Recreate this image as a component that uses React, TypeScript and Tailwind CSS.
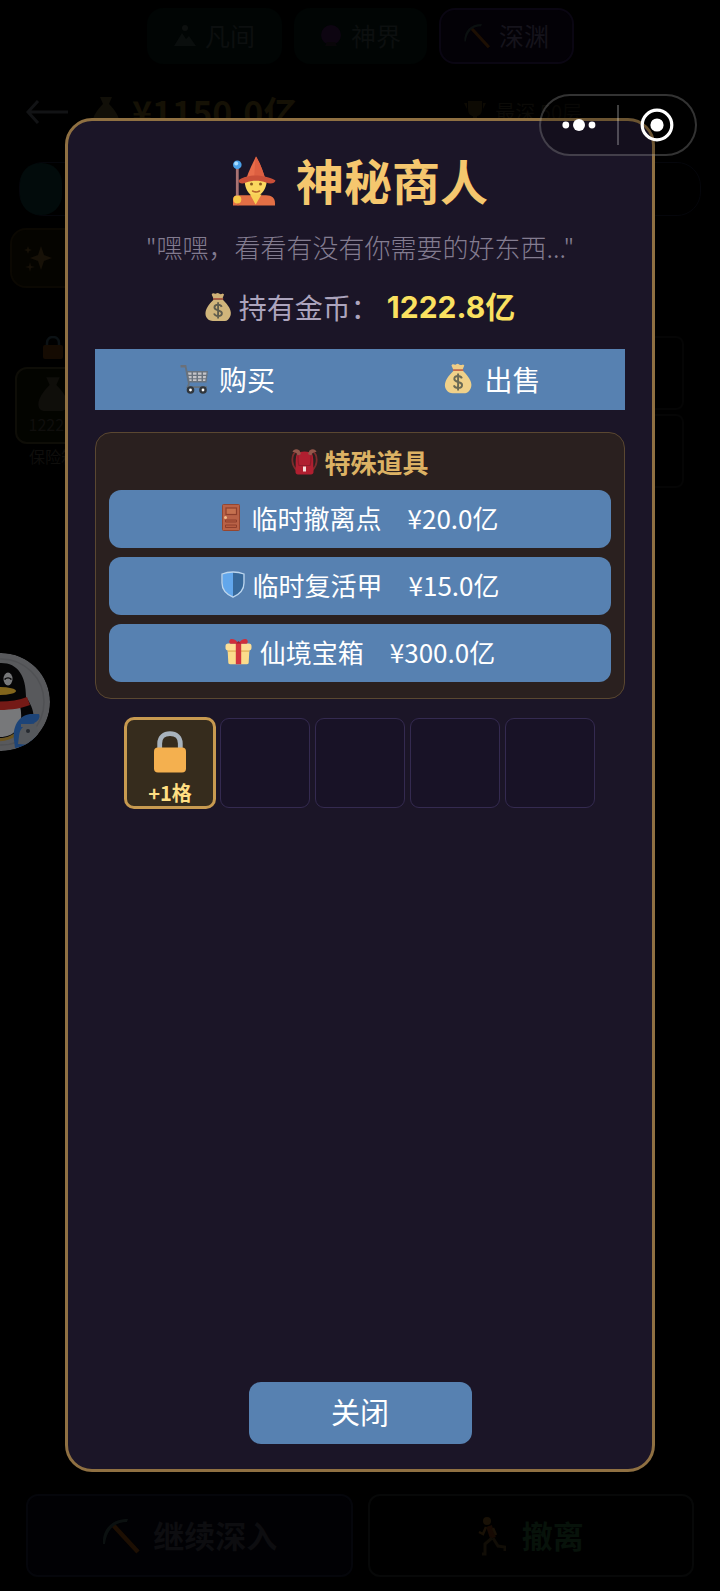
import React from "react";

type IconProps = { className: string };

const Wizard = ({ className }: IconProps) => (
  <svg viewBox="0 0 44 50" className={className} aria-hidden="true">
    <path d="M1 49.500V43c0-2.500 2-3.800 5-3.800h28c6 0 9 2.800 9 8v2.300z" fill="#e36f45" />
    <path d="M6 39.200V49.500" stroke="#c75a38" strokeWidth="1" />
    <path d="M12.500 22h22.500c0 9-3.500 14.500-8 17.500l-3.500 8.500-3.800-8.500c-4.500-3-7.200-8.500-7.200-17.500z" fill="#fbd75f" />
    <path d="M18 38.500h11.500l-5.800 10z" fill="#f8cf55" />
    <path d="M12.500 21h22.500l-1.500 4c-6-1.500-13-1.500-19 0z" fill="#e9b944" />
    <path d="M24 0.500c-3.500 7-7.500 15-9.500 21.500h18.500C31 15 27.500 6 24 0.500z" fill="#e86c4a" />
    <path d="M24 0.500c-1.500 6-1 15-2 21.500h11C31 15 27.500 6 24 0.500z" fill="#dd5f41" />
    <path d="M15 20.500C10 21.500 7.500 23.500 6.500 24.500c0 2.800 3.500 3.800 7.500 2 6-2.500 14-2.500 20 0 4.500 1.800 9 .8 9.500-2-2-1-5-3-11-4-5-1.500-13-1.500-17.500 0z" fill="#c94f38" />
    <circle cx="19.500" cy="28" r="1.500" fill="#8a5a20" />
    <circle cx="28.500" cy="28" r="1.500" fill="#8a5a20" />
    <path d="M20.500 35c2.500 1.300 5 1.300 7 0" stroke="#b5642c" strokeWidth="1.500" fill="none" strokeLinecap="round" />
    <path d="M5.300 11v32" stroke="#a97272" strokeWidth="2.800" />
    <circle cx="5.300" cy="8.800" r="4.300" fill="#4aa0e8" />
    <circle cx="4.200" cy="7.500" r="2" fill="#a8dcff" />
    <circle cx="5.300" cy="43.500" r="4" fill="#f7c948" />
  </svg>
);

const MoneyBag = ({ className }: IconProps) => (
  <svg viewBox="0 0 28 32" className={className} aria-hidden="true">
    <path d="M8 1.500c1.500-1 2.500.8 3.800 0s2.200-1 3.400 0 2.300.8 4 0l1.300 1-1.800 4.500H9.200L7.200 2.500z" fill="#f0cd85" />
    <path d="M9.500 8h9.500c4 4 8.500 9 8.800 14 .2 2.500-.6 4.500-1.800 6-1.500 2.600-4 3.200-6 3.200H8.500c-2.500 0-5-1-6.200-3C.8 26.500.2 24 .6 21.500 1.500 16 6 11.500 9.500 8z" fill="#f0d18a" />
    <path d="M9.500 7.300h9.300" stroke="#c7694a" strokeWidth="1.800" strokeLinecap="round" />
    <path d="M18 15.800c-.7-1.600-2-2.300-3.900-2.300-2.300 0-3.900 1.100-3.900 3 0 4 8 2.200 8 6.100 0 2-1.700 3.100-4.100 3.100-2.200 0-3.700-.9-4.400-2.700M14.100 10.800v17.600" stroke="#6b6a55" strokeWidth="2" fill="none" />
  </svg>
);

const Cart = ({ className }: IconProps) => (
  <svg viewBox="0 0 29 30" className={className} aria-hidden="true">
    <path d="M1 2h4.500l3.500 18" stroke="#66717c" strokeWidth="1.800" fill="none" />
    <path d="M0.500 1h5.500v2.500H0.500z" fill="#6b7079" />
    <path d="M6 7h22l-1.500 11.500H8.300z" fill="#69737e" />
    <g fill="#c4c4c8">
      <path d="M8 8.500h3.500v2.300H8.500zM13 8.500h3.500v2.300H13zM18 8.500h3.500v2.300H18zM23 8.500h3.500l-.3 2.300H23z" />
      <path d="M8.600 12h3v2.200H9zM13 12h3.500v2.200H13zM18 12h3.500v2.200H18zM23 12h3l-.3 2.200H23z" />
      <path d="M9.200 15.300h2.400v1.600H9.500zM13 15.300h3.500v1.600H13zM18 15.300h3.500v1.600H18zM23 15.300h2.500l-.2 1.600H23z" />
    </g>
    <path d="M9 20l-1.500 3.200h19.500" stroke="#66717c" strokeWidth="1.800" fill="none" />
    <circle cx="10.500" cy="26" r="2.600" fill="#fff" stroke="#30363c" strokeWidth="2.400" />
    <circle cx="23" cy="26" r="2.600" fill="#fff" stroke="#30363c" strokeWidth="2.400" />
  </svg>
);

const Backpack = ({ className }: IconProps) => (
  <svg viewBox="0 0 27 27" className={className} aria-hidden="true">
    <path d="M6 3C2 5 1 10 1.500 14c.3 4 2 6 4 8M21 3c4 2 5 7 4.500 11-.3 4-2 6-4 8" stroke="#7c2b2c" strokeWidth="1.800" fill="none" />
    <path d="M6 5.500C8 4.300 10 3.500 13.500 3.500S19 4.300 21 5.500c1.500 3 1.300 8 1.300 12l.2 6.500c0 1.500-1 2.500-2.500 2.500H7c-1.500 0-2.500-1-2.500-2.500l.2-6.500c0-4-.2-9 1.300-12z" fill="#b01f30" />
    <path d="M1.500 4C2.500.8 6 .5 8.500 2.500L10 6 6.500 8c0-3-2-4-5-4zM25.500 4c-1-3.200-4.500-3.500-7-1.500L17 6l3.500 2c0-3 2-4 5-4z" fill="#93574b" />
    <path d="M7 7c0 5 0 8 1 10.500h11c1-2.500 1-5.500 1-10.500" stroke="#8f1a29" strokeWidth="1.200" fill="none" />
    <path d="M12 18.500h3v5h-3z" fill="#f6dedb" />
  </svg>
);

const Door = ({ className }: IconProps) => (
  <svg viewBox="0 0 18 27" className={className} aria-hidden="true">
    <rect x="0.500" y="0.500" width="17" height="26" rx="1" fill="#b96247" stroke="#96462f" />
    <rect x="4" y="4" width="10.500" height="6.500" fill="#c5714f" stroke="#8e3f2c" strokeWidth="1.200" />
    <path d="M3.500 16h11v2h-11zM3.500 21h11v2.500h-11z" fill="#b65c40" stroke="#8e3f2c" />
    <circle cx="3.500" cy="13.500" r="1.500" fill="#f4bd8b" />
  </svg>
);

const Shield = ({ className }: IconProps) => (
  <svg viewBox="0 0 24 27" className={className} aria-hidden="true">
    <path d="M12 1.200C8.500 1.200 5 1.800 1.500 3v9c0 6.500 4.500 11 10.500 14z" fill="#62a7ec" />
    <path d="M12 1.200c3.500 0 7 .6 10.500 1.800v9c0 6.500-4.500 11-10.500 14z" fill="#37699b" />
    <path d="M12 1C8.500 1 4.500 1.600 1 3v9c0 6.500 5 11.500 11 14.200C18 23.500 23 18.500 23 12V3C19.500 1.600 15.500 1 12 1z" fill="none" stroke="#bcd6ee" strokeWidth="1.300" />
  </svg>
);

const Gift = ({ className }: IconProps) => (
  <svg viewBox="0 0 27 27" className={className} aria-hidden="true">
    <path d="M2.500 10h22l-.8 14.500c0 1-.7 1.700-1.700 1.700H5c-1 0-1.700-.7-1.700-1.700z" fill="#fbdc8c" />
    <path d="M2.600 11h21.800l-.2 3H2.800z" fill="#e9bc66" />
    <rect x="0.500" y="5.500" width="26" height="6.800" rx="2.600" fill="#fddf97" />
    <path d="M10.800 5h5.400v21.200h-5.400z" fill="#d2343f" />
    <path d="M13.500 5.500C11 1.500 7 .2 5.200 1.500 3.500 3 4.200 5 5.500 5.700h16c1.300-.7 2-2.700.3-4.200-1.800-1.300-5.800 0-8.300 4z" fill="#cf2f3d" />
    <path d="M11 5.500L13.500 3 16 5.500z" fill="#a31f30" />
  </svg>
);

const Lock = ({ className }: IconProps) => (
  <svg viewBox="0 0 34 42" className={className} aria-hidden="true">
    <path d="M6.700 19v-6.500C6.700 6.500 11 2.700 17 2.700s10.300 3.800 10.300 9.800V19" fill="none" stroke="#a8b3bd" strokeWidth="4.800" />
    <rect x="1" y="16.500" width="32" height="25" rx="4" fill="#f4b04f" />
  </svg>
);

const Pickaxe = ({ className }: IconProps) => (
  <svg viewBox="0 0 40 40" className={className} aria-hidden="true">
    <path d="M12 9l25 27" stroke="#1d0f03" strokeWidth="4.500" />
    <path d="M2 28C1 14 10 3 27 3l-1 3C14 6 6 13 4 28z" fill="#0b1010" />
  </svg>
);

const Runner = ({ className }: IconProps) => (
  <svg viewBox="0 0 28 40" className={className} aria-hidden="true" fill="none">
    <circle cx="9" cy="5" r="4" fill="#191106" />
    <path d="M11 10l4 12" stroke="#170a03" strokeWidth="6" />
    <path d="M8 11l-3 7-4-2M15 12l3 7" stroke="#191106" strokeWidth="2.500" />
    <path d="M14 22l-7 6v10H4M15 22l5 8 7 1v4" stroke="#110d06" strokeWidth="3" />
  </svg>
);

const Penguin = () => (
  <svg viewBox="0 0 98 98" className="size-[98px]" aria-hidden="true">
    <defs>
      <clipPath id="badge"><circle cx="49" cy="49" r="49" /></clipPath>
    </defs>
    <g clipPath="url(#badge)">
      <circle cx="49" cy="49" r="49" fill="#58595c" />
      <circle cx="49" cy="49" r="43" fill="none" stroke="#505154" strokeWidth="1.500" />
      <path d="M23 45C23 22 32 10 49 10s25 13 25 34c5 7 9 16 7 23l-6-4c-2 14-10 22-26 22S25 77 23 63l-6 4c-2-7 2-16 6-22z" fill="#050506" />
      <path d="M27 53c12 3 30 3 41 0 4 16-2 31-20 31S24 69 27 53z" fill="#77787a" />
      <path d="M22 44c14 6 38 6 53 0l3 8c-14 6-43 7-58 1z" fill="#741a16" />
      <ellipse cx="40" cy="26" rx="4.500" ry="6.500" fill="#77787a" />
      <ellipse cx="56" cy="26" rx="4.500" ry="6.500" fill="#77787a" />
      <path d="M52.500 26.500c2-2 5-2 7 0" stroke="#09090a" strokeWidth="1.600" fill="none" />
      <ellipse cx="48" cy="38" rx="16" ry="4" fill="#82651c" />
      <path d="M36 85c10 3 20 2 28-4" stroke="#6c5520" strokeWidth="3" fill="none" />
      <path d="M62 87c-2-16 7-26 18-26h7c2 4-2 8-5 9l4 10-8 12-15 3z" fill="#1d4478" />
      <path d="M67 83c1-9 7-13 17-12l3 12-9 9-12-1z" fill="#55585c" />
      <path d="M69 71h10v3H69z" fill="#55585c" />
      <circle cx="76" cy="78" r="2" fill="#252a30" />
    </g>
  </svg>
);

function DimmedPage() {
  return (
    <div className="flex min-h-screen flex-col bg-black" aria-hidden="true">
      <nav className="flex justify-center gap-3 pt-2 text-[25px] text-[#0c0f0f]">
        <span className="flex h-14 w-[135px] items-center justify-center gap-2 rounded-2xl bg-[#010504]">
          <svg viewBox="0 0 24 24" className="size-6"><path d="M1 22L9 9l4 6 3-3 7 10z" fill="#0a0e0d" /><circle cx="12" cy="4" r="3" fill="#0d100f" /></svg>
          凡间
        </span>
        <span className="flex h-14 w-[133px] items-center justify-center gap-2 rounded-2xl bg-[#010504]">
          <svg viewBox="0 0 24 24" className="size-6"><circle cx="12" cy="11" r="10" fill="#0d0511" /><path d="M6 22h12l-2-4H8z" fill="#090609" /></svg>
          神界
        </span>
        <span className="flex h-14 w-[135px] items-center justify-center gap-2 rounded-2xl border-2 border-[#0a0612] bg-[#030106] text-[#15131b]">
          <Pickaxe className="size-7" />
          深渊
        </span>
      </nav>
      <header className="flex items-center gap-6 px-[26px] pt-6">
        <svg viewBox="0 0 42 24" className="h-6 w-[42px]" fill="none" stroke="#121315" strokeWidth="3"><path d="M12 1L2 12l10 11M2 12h40" /></svg>
        <span className="flex items-center gap-3 text-[34px] leading-[48px] font-bold text-[#151105]">
          <svg viewBox="0 0 28 32" className="h-8 w-7"><path d="M8 1h12l-3 7c6 6 10 12 10 17 0 4-3 6-6 6H7c-4 0-6-2-6-6 0-5 4-11 10-17z" fill="#110f08" /></svg>
          ¥1150.0亿
        </span>
        <span className="ml-auto flex items-center gap-2 pr-[112px] text-[20px] text-[#0b0a07]">
          <svg viewBox="0 0 24 24" className="size-6"><path d="M5 1h14v8c0 5-3 7-5 7v4h4v3H6v-3h4v-4c-2 0-5-2-5-7zM1 3h3v6zM23 3h-3v6z" fill="#0d0a03" /></svg>
          最深 50层
        </span>
      </header>
      <div className="mx-[19px] mt-[26px] flex h-[54px] rounded-3xl border border-[#05060b]">
        <div className="w-[42px] rounded-[20px] bg-[#020b0b]" />
      </div>
      <div className="mt-3 ml-[10px] flex h-[60px] w-[160px] items-center gap-3 rounded-2xl border-2 border-[#0b0802] bg-[#050400] px-3 text-[24px] text-[#150f04]">
        <svg viewBox="0 0 28 28" className="size-7"><path d="M17 2l3 9 8 3-8 3-3 9-3-9-8-3 8-3zM4 2l1 3 3 1-3 1-1 3-1-3-3-1 3-1zM6 18l1 4 4 1-4 1-1 4-1-4-4-1 4-1z" fill="#171107" /></svg>
        特权
      </div>
      <div className="mt-12 flex justify-between pr-[36px] pl-[15px]">
        <div className="flex w-[76px] flex-col items-center text-[16px] text-[#0f0e0c]">
          <svg viewBox="0 0 20 23" className="h-[23px] w-5"><path d="M4 10V7c0-8 12-8 12 0v3" stroke="#0b1114" strokeWidth="2.500" fill="none" /><rect y="9" width="20" height="14" rx="2" fill="#150b02" /></svg>
          <div className="mt-2 flex h-[77px] w-full flex-col items-center justify-center rounded-xl border-2 border-[#0e0d07] bg-[#030400]">
            <svg viewBox="0 0 28 32" className="h-9 w-8"><path d="M8 1h12l-3 7c6 6 10 12 10 17 0 4-3 6-6 6H7c-4 0-6-2-6-6 0-5 4-11 10-17z" fill="#0f0e0a" /></svg>
            1222.8
          </div>
          <span>保险箱</span>
        </div>
        <div className="flex flex-col gap-1">
          <div className="size-[74px] rounded-lg border-2 border-[#050505]" />
          <div className="size-[74px] rounded-lg border-2 border-[#050505]" />
        </div>
      </div>
      <footer className="mt-auto flex gap-[15px] px-[26px] pb-[14px] text-[31px] font-bold">
        <div className="flex h-[83px] flex-1 items-center justify-center gap-3 rounded-xl border-2 border-[#05060b] bg-[#010104] text-[#0d0d10]">
          <Pickaxe className="size-10" />
          继续深入
        </div>
        <div className="flex h-[83px] flex-1 items-center justify-center gap-4 rounded-xl border-2 border-[#070808] text-[#07120a]">
          <Runner className="h-10 w-7" />
          撤离
        </div>
      </footer>
    </div>
  );
}

const items = [
  { name: "临时撤离点", price: "¥20.0亿", icon: <Door className="h-[27px] w-[18px]" />, gap: "gap-3" },
  { name: "临时复活甲", price: "¥15.0亿", icon: <Shield className="h-[27px] w-6" />, gap: "gap-2" },
  { name: "仙境宝箱", price: "¥300.0亿", icon: <Gift className="size-[27px]" />, gap: "gap-2" },
];

export default function App() {
  return (
    <div className="relative min-h-screen overflow-hidden bg-black font-['Noto_Sans_CJK_SC',sans-serif]">
      <DimmedPage />

      <div className="absolute top-[653px] -left-12">
        <Penguin />
      </div>

      <div className="absolute inset-0 flex px-[65px] pt-[118px] pb-[119px]">
        <section
          role="dialog"
          aria-labelledby="shop-title"
          className="flex flex-1 flex-col items-center rounded-[27px] border-3 border-[#8f7042] bg-[#1b1527] px-[27px] pb-[25px]"
        >
          <h1 id="shop-title" className="mt-6 flex items-center gap-5 text-[48px] leading-[68px] font-bold text-[#f5c76e]">
            <Wizard className="mt-1 h-[50px] w-11" />
            神秘商人
          </h1>
          <p className="mt-[10px] text-[26px] leading-[48px] font-light text-[#837c90]">"嘿嘿，看看有没有你需要的好东西..."</p>
          <p className="mt-2 flex items-center text-[28px] leading-[56px] text-[#aca4bd]">
            <MoneyBag className="mr-2 h-[30px] w-[26px] opacity-85" />
            持有金币：
            <strong className="ml-2 font-[Inter,'Noto_Sans_CJK_SC',sans-serif] text-[30px] font-bold text-[#fae160]">1222.8亿</strong>
          </p>

          <div className="mt-[14px] flex w-full bg-[#5781b1] text-[28px] text-white">
            <button type="button" className="flex h-[61px] flex-1 items-center justify-center gap-[10px] pb-[2px]">
              <Cart className="h-[30px] w-[29px]" />
              购买
            </button>
            <button type="button" className="flex h-[61px] flex-1 items-center justify-center gap-3 pb-[2px]">
              <MoneyBag className="h-[31px] w-7" />
              出售
            </button>
          </div>

          <div className="mt-[22px] flex w-full flex-col gap-[9px] rounded-2xl border border-[#5a4731] bg-[#2a201f] px-[13px] pb-4">
            <h2 className="-mb-[9px] flex h-[57px] items-center justify-center gap-[6px] text-[26px] font-bold text-[#dcb264]">
              <Backpack className="size-[27px]" />
              特殊道具
            </h2>
            {items.map((item) => (
              <button
                key={item.name}
                type="button"
                className={"flex h-[58px] w-full items-center justify-center rounded-xl bg-[#5781b1] pb-1 text-[26px] text-white " + item.gap}
              >
                {item.icon}
                <span className="flex gap-[26px]">
                  <span>{item.name}</span>
                  <span>{item.price}</span>
                </span>
              </button>
            ))}
          </div>

          <div className="mt-[19px] flex gap-[5px]">
            <button
              type="button"
              className="flex size-[90px] flex-col items-center justify-end rounded-[9px] border-2 border-[#c89a50] bg-[#362c1d] text-[20px] leading-[26px] font-bold text-[#ffdf83] ring-1 ring-[#c89a50]"
            >
              <Lock className="mb-[7px] h-[42px] w-[34px]" />
              +1格
            </button>
            {[1, 2, 3, 4].map((slot) => (
              <div key={slot} className="size-[90px] rounded-[9px] border border-[#342a50] bg-[#181226]" />
            ))}
          </div>

          <button type="button" className="mt-auto h-[62px] w-[223px] rounded-xl bg-[#5781b1] pb-[2px] text-[29px] text-white">
            关闭
          </button>
        </section>
      </div>

      <div className="absolute top-[94px] right-[23px] flex h-[62px] w-[158px] items-center rounded-full border-2 border-white/20 bg-black/25">
        <button type="button" aria-label="更多" className="flex h-full flex-1 items-center justify-center">
          <svg viewBox="0 0 34 14" className="h-[14px] w-[34px]" fill="#fff">
            <circle cx="3.800" cy="7" r="3.400" />
            <circle cx="17" cy="7" r="6" />
            <circle cx="30" cy="7" r="3.400" />
          </svg>
        </button>
        <span className="h-10 w-[2px] bg-white/25" />
        <button type="button" aria-label="退出" className="flex h-full flex-1 items-center justify-center">
          <svg viewBox="0 0 34 34" className="size-[34px]">
            <circle cx="17" cy="17" r="14.800" fill="none" stroke="#fff" strokeWidth="3.200" />
            <circle cx="17" cy="17" r="6.600" fill="#fff" />
          </svg>
        </button>
      </div>
    </div>
  );
}
